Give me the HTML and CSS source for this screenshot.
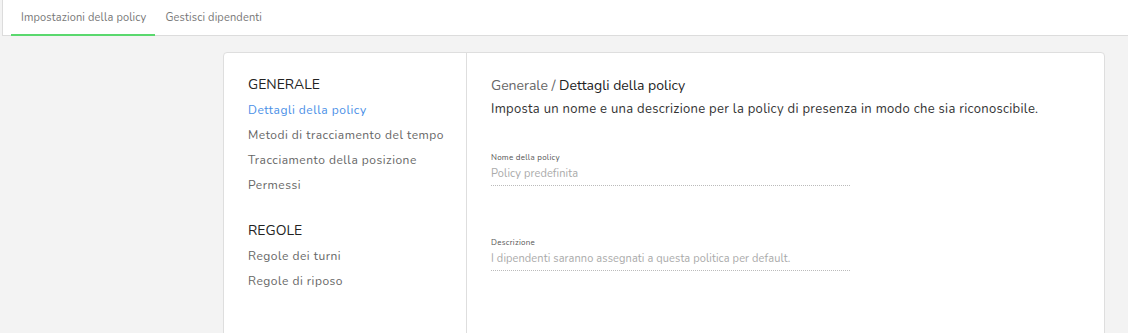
FILE: index.html
```html
<!DOCTYPE html>
<html lang="it">
<head>
    <meta charset="UTF-8">
    <meta name="viewport" content="width=device-width, initial-scale=1.0">
    <title>Impostazioni della policy</title>
    <link rel="stylesheet" href="styles.css">
</head>
<body>
    <div class="tabs">
        <a href="#" class="tab active">Impostazioni della policy</a>
        <a href="#" class="tab">Gestisci dipendenti</a>
    </div>

    <div class="page">
        <div class="card">
            <div class="sidebar">
                <div class="group">
                    <h3>GENERALE</h3>
                    <a href="#" class="active">Dettagli della policy</a>
                    <a href="#">Metodi di tracciamento del tempo</a>
                    <a href="#">Tracciamento della posizione</a>
                    <a href="#">Permessi</a>
                </div>
                <div class="group">
                    <h3>REGOLE</h3>
                    <a href="#">Regole dei turni</a>
                    <a href="#">Regole di riposo</a>
                </div>
            </div>

            <div class="details">
                <h2><span class="crumb">Generale /</span> Dettagli della policy</h2>
                <p class="intro">Imposta un nome e una descrizione per la policy di presenza in modo che sia riconoscibile.</p>

                <div class="field">
                    <label>Nome della policy</label>
                    <div class="value">Policy predefinita</div>
                </div>

                <div class="field">
                    <label>Descrizione</label>
                    <div class="value">I dipendenti saranno assegnati a questa politica per default.</div>
                </div>
            </div>
        </div>
    </div>
</body>
</html>
```

FILE: styles.css
```css
/* Global styles */
* {
    margin: 0;
    padding: 0;
    box-sizing: border-box;
}

body {
    font-family: 'Nunito', 'Lato', 'Noto Sans', sans-serif;
    background-color: #f3f3f3;
    color: #333;
    height: 333px;
    overflow: hidden;
}

/* Tabs */
.tabs {
    display: flex;
    height: 36px;
    background-color: #fff;
    border-bottom: 1px solid #dcdcdc;
    border-left: 1px solid #dcdcdc;
    margin-left: 2px;
    padding-left: 8px;
}

.tab {
    display: flex;
    align-items: center;
    padding: 0 9px 0 10px;
    font-size: 11px;
    color: #777;
    letter-spacing: 0.15px;
    text-decoration: none;
    border-bottom: 2px solid transparent;
    margin-bottom: -1px;
}

.tab.active {
    border-bottom-color: #5ad86e;
}

/* Card */
.page {
    padding: 16px 23px 0 223px;
}

.card {
    display: flex;
    background-color: #fff;
    border: 1px solid #dedede;
    border-radius: 4px;
    height: 300px;
}

/* Sidebar */
.sidebar {
    width: 243px;
    border-right: 1px solid #dedede;
    padding: 22px 0 0 24px;
}

.group {
    display: flex;
    flex-direction: column;
    margin-bottom: 23px;
}

.group h3 {
    font-size: 14px;
    font-weight: 400;
    color: #222;
    line-height: 20px;
    margin-bottom: 3px;
}

.group a {
    font-size: 12px;
    color: #666;
    text-decoration: none;
    letter-spacing: 0.5px;
    line-height: 25px;
}

.group a.active {
    color: #4a8fe7;
}

/* Details */
.details {
    flex: 1;
    padding: 23px 0 0 24px;
}

.details h2 {
    font-size: 14px;
    font-weight: 400;
    color: #222;
    line-height: 20px;
}

.details h2 .crumb {
    color: #666;
}

.intro {
    font-size: 13px;
    color: #333;
    letter-spacing: 0.3px;
    line-height: 20px;
    margin-top: 3px;
    margin-bottom: 33px;
}

.field {
    width: 359px;
    margin-bottom: 51px;
}

.field label {
    display: block;
    font-size: 8px;
    color: #555;
    letter-spacing: 0.25px;
    line-height: 12px;
}

.field .value {
    font-size: 11px;
    color: #aaa;
    letter-spacing: 0.1px;
    line-height: 16px;
    margin-top: 2px;
    padding-bottom: 3px;
    border-bottom: 1px dotted #bbb;
}
```
